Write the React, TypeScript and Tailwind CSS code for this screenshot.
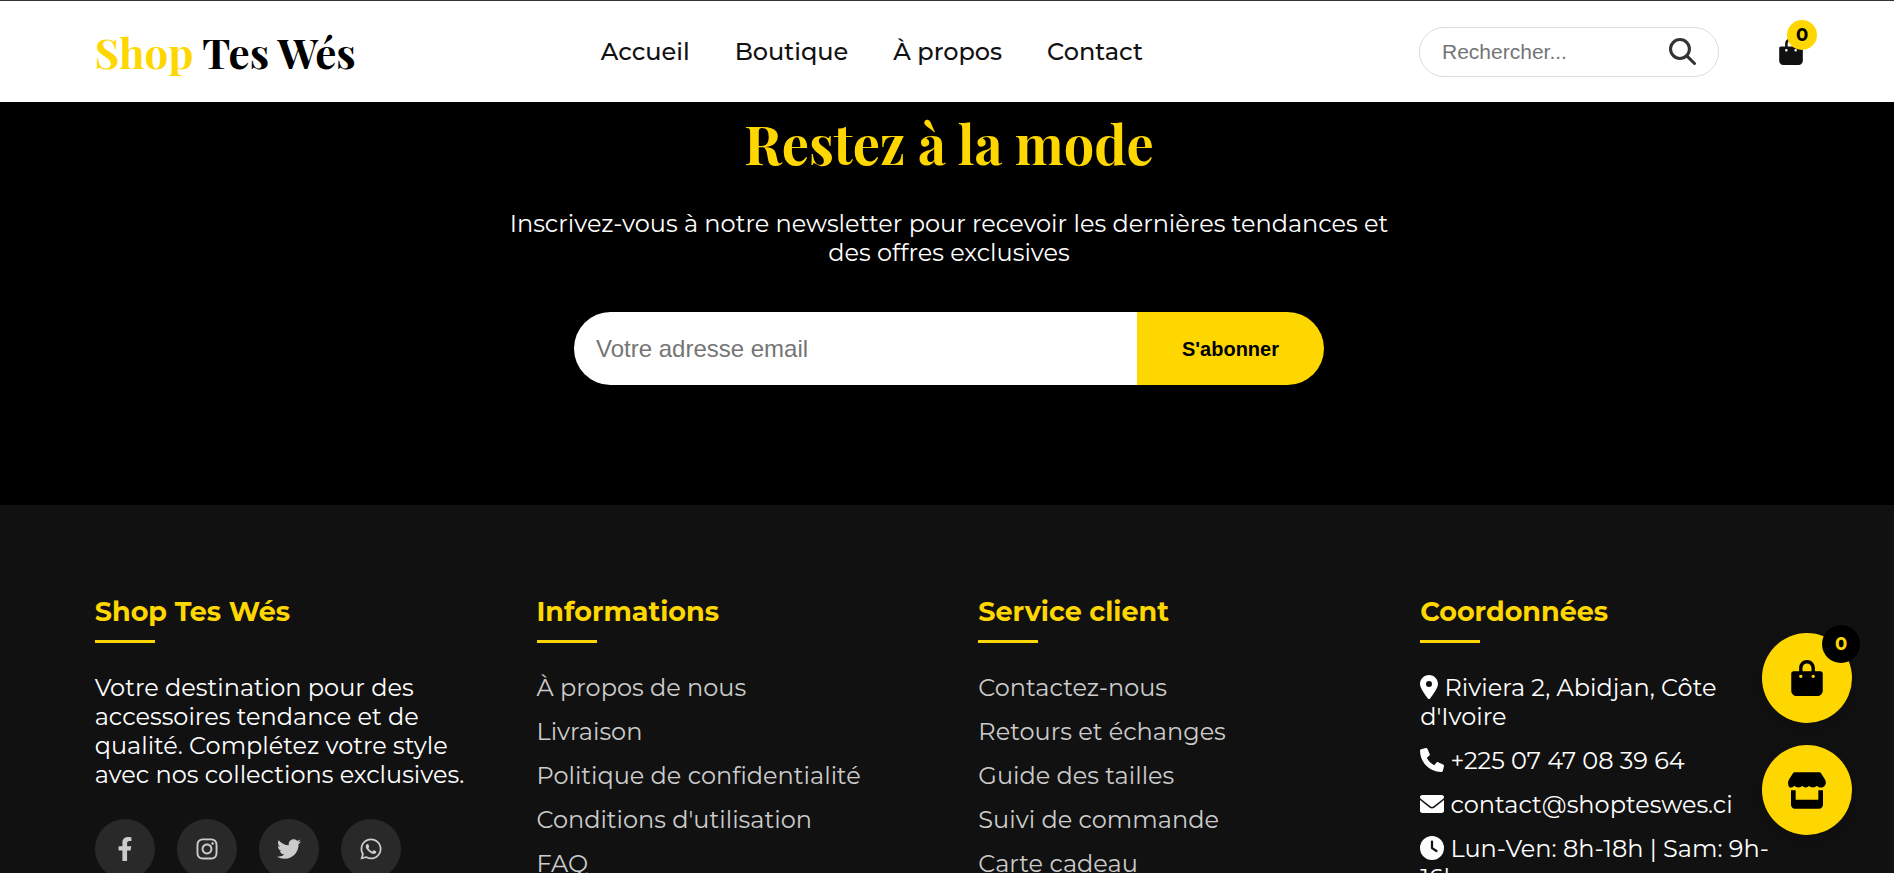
import { FaFacebookF } from "react-icons/fa";
import { FaClock, FaInstagram, FaLocationDot, FaTwitter, FaWhatsapp } from "react-icons/fa6";

const navLinks = ["Accueil", "Boutique", "À propos", "Contact"];

const infoLinks = ["À propos de nous", "Livraison", "Politique de confidentialité", "Conditions d'utilisation", "FAQ"];

const serviceLinks = ["Contactez-nous", "Retours et échanges", "Guide des tailles", "Suivi de commande", "Carte cadeau"];

const socials = [
  { label: "Facebook", Icon: FaFacebookF },
  { label: "Instagram", Icon: FaInstagram },
  { label: "Twitter", Icon: FaTwitter },
  { label: "WhatsApp", Icon: FaWhatsapp },
];

/* Icons */
function BagIcon({ className }: { className: string }) {
  return (
    <svg viewBox="0 0 448 512" fill="currentColor" className={className} aria-hidden="true">
      <path
        fillRule="evenodd"
        d="M416 160h-80v-48C336 50.25 285.8 0 224 0S112 50.25 112 112v48H32c-17.67 0-32 14.33-32 32v240c0 44.13 35.88 80 80 80h288c44.13 0 80-35.88 80-80V192c0-17.67-14.33-32-32-32zM160 112c0-35.3 28.7-64 64-64s64 28.7 64 64v48H160v-48zM136 256c-13.25 0-24-10.75-24-24s10.75-24 24-24 24 10.75 24 24-10.75 24-24 24zM312 256c-13.25 0-24-10.75-24-24s10.75-24 24-24 24 10.75 24 24-10.75 24-24 24z"
      />
    </svg>
  );
}

function SearchIcon() {
  return (
    <svg viewBox="0 0 512 512" fill="none" stroke="currentColor" strokeWidth="58" className="size-[27px]" aria-hidden="true">
      <circle cx="208" cy="208" r="179" />
      <path d="M338 338l145 145" strokeLinecap="round" />
    </svg>
  );
}

function StoreIcon() {
  return (
    <svg viewBox="0 0 114 110" fill="currentColor" className="h-[37px] w-[38px]" aria-hidden="true">
      <path d="M20 0h74c2 0 4 1 5 3l12 19c6 10 1 23-10 24-6 1-11-1-14-5-4 4-8 5-12 5-5 0-9-2-12-5-2 3-6 5-10 5s-8-2-10-5c-3 3-7 5-12 5-4 0-8-1-12-5-3 4-8 6-14 5C2 45-3 32 3 22L15 3c1-2 3-3 5-3z" />
      <path d="M9 54h14v29h68V54h14v44c0 7-5 12-12 12H21c-7 0-12-5-12-12z" />
    </svg>
  );
}

function PhoneIcon() {
  return (
    <svg viewBox="0 0 512 512" fill="currentColor" className="inline size-6 align-[-3px]" aria-hidden="true">
      <path d="M511.2 387l-23.25 100.8c-3.266 14.25-15.79 24.22-30.46 24.22C205.2 512 0 306.8 0 54.5c0-14.66 9.969-27.2 24.22-30.45l100.8-23.25C139.7-2.602 154.7 5.018 160.8 18.92l46.52 108.5c5.438 12.78 1.77 27.67-8.98 36.45L144.5 207.1c33.98 69.22 90.26 125.5 159.5 159.5l44.08-53.8c8.688-10.78 23.69-14.51 36.47-8.975l108.5 46.51C506.1 357.2 514.6 372.4 511.2 387z" />
    </svg>
  );
}

function MailIcon() {
  return (
    <svg viewBox="0 0 512 512" fill="currentColor" className="inline size-6 align-[-3px]" aria-hidden="true">
      <path d="M256 352c-16.53 0-33.06-5.422-47.16-16.41L0 173.2V400C0 426.5 21.49 448 48 448h416c26.51 0 48-21.49 48-48V173.2l-208.8 162.5C289.1 346.6 272.5 352 256 352zM16.29 145.3l212.2 165.1c16.19 12.6 38.87 12.6 55.06 0l212.2-165.1C505.1 137.3 512 125 512 112C512 85.49 490.5 64 464 64h-416C21.49 64 0 85.49 0 112C0 125 6.01 137.3 16.29 145.3z" />
    </svg>
  );
}

function Header() {
  return (
    <header className="flex h-[102px] shrink-0 items-center justify-between border-t border-[#333] bg-white pl-[5%] pr-[77px]">
      <a href="#" className="w-[506px] pt-0.5 font-['Playfair_Display','Liberation_Serif',serif] text-[42px] font-bold text-black">
        <span className="text-[#ffd700]">Shop</span> Tes Wés
      </a>

      <nav className="flex flex-1 gap-[45px]">
        {navLinks.map((link) => (
          <a key={link} href="#" className="text-2xl font-medium text-[#111]">
            {link}
          </a>
        ))}
      </nav>

      <div className="flex items-center gap-[60px]">
        <form className="flex h-[50px] w-[300px] items-center rounded-full border border-[#ddd] px-[22px]">
          <input
            type="text"
            aria-label="Rechercher"
            placeholder="Rechercher..."
            className="min-w-0 flex-1 font-['Liberation_Sans',sans-serif] text-[21px] text-[#333] outline-none placeholder:text-[#757575]"
          />
          <button type="button" aria-label="Lancer la recherche" className="text-[#333]">
            <SearchIcon />
          </button>
        </form>

        <a href="#" aria-label="Panier" className="relative w-[38px] text-[#111]">
          <BagIcon className="h-[27px] w-6" />
          <span className="absolute -top-[18px] left-2 flex size-[30px] items-center justify-center rounded-full bg-[#ffd700] text-lg font-bold text-black">
            0
          </span>
        </a>
      </div>
    </header>
  );
}

function Newsletter() {
  return (
    <section className="shrink-0 bg-black pt-[7px] pb-[120px] pl-1 text-center">
      <h2 className="font-['Playfair_Display','Liberation_Serif',serif] text-[54px] leading-[68px] font-bold text-[#ffd700]">
        Restez à la mode
      </h2>
      <p className="mt-8 text-2xl leading-[29px] text-white">
        Inscrivez-vous à notre newsletter pour recevoir les dernières tendances et
        <br />
        des offres exclusives
      </p>
      <form className="mx-auto mt-[45px] flex h-[73px] w-full max-w-[750px] overflow-hidden rounded-full">
        <input
          type="email"
          aria-label="Votre adresse email"
          placeholder="Votre adresse email"
          className="min-w-0 flex-1 bg-white px-[22px] font-['Liberation_Sans',sans-serif] text-2xl text-black outline-none placeholder:text-[#757575]"
        />
        <button
          type="button"
          className="bg-[#ffd700] px-[45px] font-['Liberation_Sans',sans-serif] text-xl font-bold text-black"
        >
          S'abonner
        </button>
      </form>
    </section>
  );
}

function ColumnTitle({ children }: { children: string }) {
  return (
    <h3 className="mb-[30px] text-[27px] leading-[33px] font-bold text-[#ffd700] after:mt-3 after:block after:h-[3px] after:w-[60px] after:bg-[#ffd700]">
      {children}
    </h3>
  );
}

function LinkColumn({ title, links }: { title: string; links: string[] }) {
  return (
    <div>
      <ColumnTitle>{title}</ColumnTitle>
      <ul className="flex flex-col gap-[15px]">
        {links.map((link) => (
          <li key={link}>
            <a href="#" className="text-[#ccc]">
              {link}
            </a>
          </li>
        ))}
      </ul>
    </div>
  );
}

function Footer() {
  return (
    <footer className="grid flex-1 grid-cols-4 gap-[60px] bg-[#111] pt-[90px] pl-[5%] pr-[92px] text-2xl leading-[29px] text-white">
      <div>
        <ColumnTitle>Shop Tes Wés</ColumnTitle>
        <p className="whitespace-nowrap">
          Votre destination pour des
          <br />
          accessoires tendance et de
          <br />
          qualité. Complétez votre style
          <br />
          avec nos collections exclusives.
        </p>
        <div className="mt-[30px] flex gap-[22px]">
          {socials.map(({ label, Icon }) => (
            <a
              key={label}
              href="#"
              aria-label={label}
              className="flex size-[60px] items-center justify-center rounded-full bg-[#292929] text-[#ccc]"
            >
              <Icon size={24} />
            </a>
          ))}
        </div>
      </div>

      <LinkColumn title="Informations" links={infoLinks} />
      <LinkColumn title="Service client" links={serviceLinks} />

      <div>
        <ColumnTitle>Coordonnées</ColumnTitle>
        <ul className="flex flex-col gap-[15px] whitespace-nowrap">
          <li>
            <FaLocationDot className="inline h-6 w-[18px] align-[-3px]" /> Riviera 2, Abidjan, Côte
            <br />
            d'Ivoire
          </li>
          <li>
            <PhoneIcon /> +225 07 47 08 39 64
          </li>
          <li>
            <MailIcon /> contact@shopteswes.ci
          </li>
          <li>
            <FaClock className="inline size-6 align-[-3px]" /> Lun-Ven: 8h-18h | Sam: 9h-
            <br />
            16h
          </li>
        </ul>
      </div>
    </footer>
  );
}

function FloatingButtons() {
  return (
    <div className="fixed right-[42px] bottom-[38px] flex flex-col gap-[22px]">
      <button
        type="button"
        aria-label="Voir le panier"
        className="relative flex size-[90px] items-center justify-center rounded-full bg-[#ffd700] text-black shadow-[0_6px_22px_rgba(0,0,0,0.2)]"
      >
        <BagIcon className="h-9 w-8" />
        <span className="absolute -top-2 -right-2 flex size-[38px] items-center justify-center rounded-full bg-black text-lg font-bold text-[#ffd700]">
          0
        </span>
      </button>
      <button
        type="button"
        aria-label="Voir la boutique"
        className="flex size-[90px] items-center justify-center rounded-full bg-[#ffd700] text-black shadow-[0_6px_22px_rgba(0,0,0,0.2)]"
      >
        <StoreIcon />
      </button>
    </div>
  );
}

export default function App() {
  return (
    <div className="flex h-screen flex-col overflow-hidden bg-[#111] font-['Montserrat','Inter',sans-serif]">
      <Header />
      <Newsletter />
      <Footer />
      <FloatingButtons />
    </div>
  );
}
